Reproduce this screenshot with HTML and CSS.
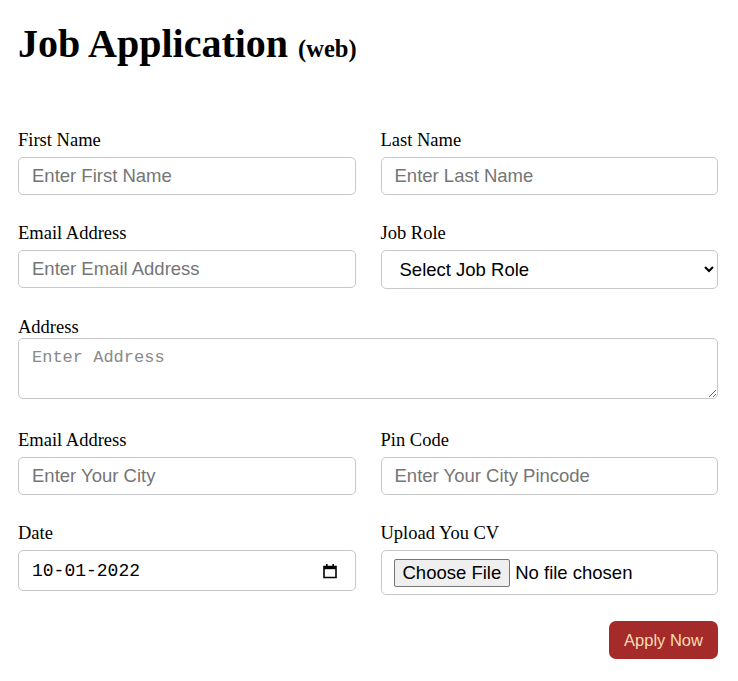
FILE: index.html
```html
<!DOCTYPE html>
<html lang="en">
<head>
<meta charset="utf-8">
<title>Job Application</title>
<link rel="stylesheet" href="styles.css">
</head>
<body>
<div class="page">
  <h1 class="title">Job Application <span class="title-sub">(web)</span></h1>
  <form class="form">
    <div class="field">
      <label class="label" for="fn">First Name</label>
      <input class="input" id="fn" type="text" placeholder="Enter First Name">
    </div>
    <div class="field">
      <label class="label" for="ln">Last Name</label>
      <input class="input" id="ln" type="text" placeholder="Enter Last Name">
    </div>
    <div class="field">
      <label class="label" for="em">Email Address</label>
      <input class="input" id="em" type="email" placeholder="Enter Email Address">
    </div>
    <div class="field">
      <label class="label" for="jr">Job Role</label>
      <select class="input select" id="jr">
        <option>Select Job Role</option>
      </select>
    </div>
    <div class="field field-wide field-tight">
      <label class="label" for="ad">Address</label>
      <textarea class="input textarea" id="ad" placeholder="Enter Address"></textarea>
    </div>
    <div class="field">
      <label class="label" for="ct">Email Address</label>
      <input class="input" id="ct" type="text" placeholder="Enter Your City">
    </div>
    <div class="field">
      <label class="label" for="pc">Pin Code</label>
      <input class="input" id="pc" type="text" placeholder="Enter Your City Pincode">
    </div>
    <div class="field">
      <label class="label" for="dt">Date</label>
      <div class="input date-box">
        <input class="date-text" id="dt" type="text" value="10-01-2022">
        <svg class="cal-icon" width="16" height="16" viewBox="0 0 16 16" aria-hidden="true">
          <path d="M2 3.5h12v11H2z" fill="none" stroke="#000" stroke-width="1.6"/>
          <rect x="2" y="3" width="12" height="3.2" fill="#000"/>
          <rect x="4" y="1" width="1.6" height="3" fill="#000"/>
          <rect x="10.4" y="1" width="1.6" height="3" fill="#000"/>
        </svg>
      </div>
    </div>
    <div class="field">
      <label class="label" for="cv">Upload You CV</label>
      <input class="input file" id="cv" type="file">
    </div>
    <div class="actions">
      <button class="btn" type="button">Apply Now</button>
    </div>
  </form>
</div>
</body>
</html>
```
FILE: styles.css
```css
* { box-sizing: border-box; }
body {
  margin: 0;
  font-family: "Liberation Serif", "Times New Roman", serif;
  color: #000;
  background: #fff;
}
.page {
  width: 736px;
  padding: 0 18px;
}
.title {
  margin: 21px 0 0;
  font-size: 40px;
  font-weight: bold;
  line-height: 46px;
}
.title-sub {
  font-size: 24.5px;
}
.form {
  margin-top: 56px;
  display: grid;
  grid-template-columns: 1fr 1fr;
  column-gap: 25px;
  row-gap: 26px;
}
.field {
  display: flex;
  flex-direction: column;
  gap: 6px;
}
.field-wide {
  grid-column: 1 / -1;
  margin-bottom: 3px;
}
.field-tight {
  gap: 0;
}
.label {
  font-size: 18.5px;
  line-height: 21px;
  padding-top: 2px;
}
.input {
  width: 100%;
  height: 38px;
  border: 1px solid #c8c8c8;
  border-radius: 5px;
  padding: 0 13px;
  font-family: "Liberation Sans", Arial, sans-serif;
  font-size: 18.5px;
  color: #000;
  background: #fff;
}
.input::placeholder { color: #757575; }
.select {
  height: 39px;
  padding: 0 8px 0 14px;
}
.textarea {
  height: 61px;
  padding: 9px 13px;
  font-family: "Liberation Mono", "Courier New", monospace;
  font-size: 17px;
  resize: vertical;
}
.textarea::placeholder { color: #8a8a8a; }
.date-box {
  height: 41px;
  display: flex;
  align-items: center;
  padding: 0 17px 0 13px;
  gap: 8px;
}
.date-text {
  flex: 1;
  min-width: 0;
  border: none;
  outline: none;
  padding: 0;
  font-family: "Liberation Mono", "Courier New", monospace;
  font-size: 18px;
  color: #000;
  background: transparent;
}
.cal-icon {
  flex: none;
  display: block;
}
.file {
  height: 45px;
  padding: 8px 12px;
  line-height: 27px;
}
.file::file-selector-button {
  font-family: "Liberation Sans", Arial, sans-serif;
  font-size: 18.5px;
  height: 28px;
  padding: 0 8px;
  margin-right: 5px;
  background: #efefef;
  border: 1px solid #767676;
  border-radius: 2px;
  color: #000;
}
.actions {
  grid-column: 1 / -1;
  display: flex;
  justify-content: flex-end;
}
.btn {
  height: 38px;
  width: 109px;
  border: none;
  border-radius: 7px;
  background: #a52a2a;
  color: #f5deb3;
  font-family: "Liberation Sans", Arial, sans-serif;
  font-size: 16.5px;
  padding: 0;
}
```
